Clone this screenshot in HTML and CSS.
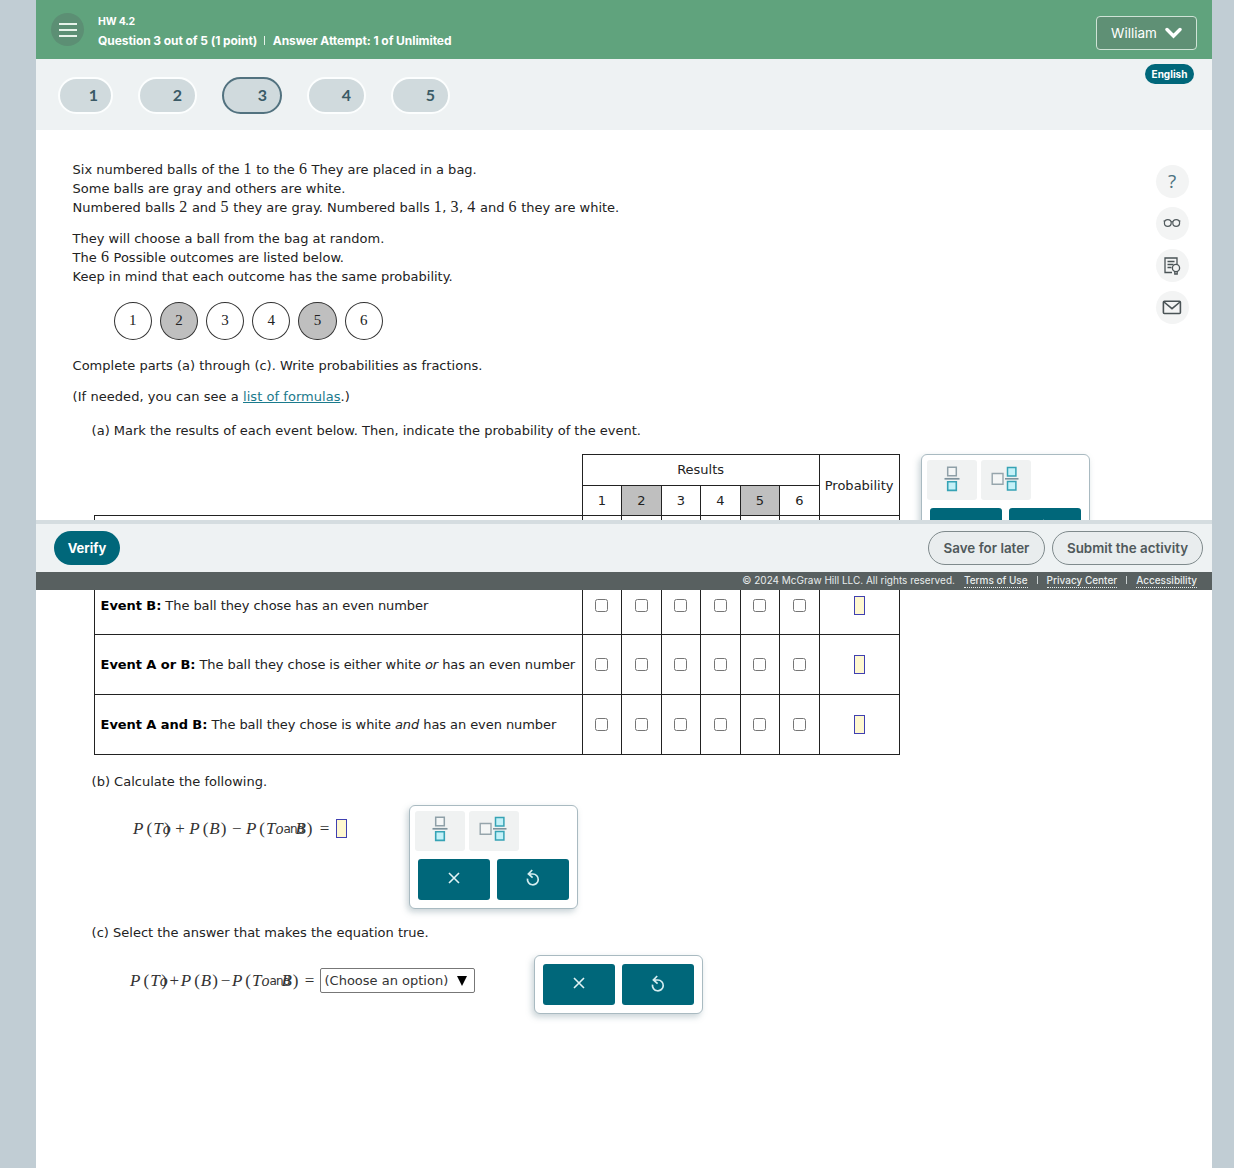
FILE: index.html
```html
<!DOCTYPE html>
<html lang="en">
<head>
  <meta charset="UTF-8" />
  <meta name="viewport" content="width=device-width" />
  <title>HW 4.2</title>
  <link rel="stylesheet" href="styles.css">
</head>

<body>
  <!-- shared icons -->
  <svg class="sprite" width="0" height="0">
    <symbol id="fraction" viewBox="0 0 16 26">
      <path d="M3.7 1.2h8.6v8.6H3.7z" fill="#f4f6f6" stroke="#8fa0a8" stroke-width="1.5" />
      <path d="M.5 12.8h15" stroke="#7d929c" stroke-width="1.7" />
      <path d="M3.7 15.8h8.6v8.6H3.7z" fill="#c3f1f8" stroke="#36a3b5" stroke-width="1.6" />
    </symbol>
    <symbol id="mixed" viewBox="0 0 28 26">
      <path d="M1.2 7.5h10.8v10.8H1.2z" fill="#f4f6f6" stroke="#96a5ac" stroke-width="1.4" />
      <path d="M14 12.8h13.5" stroke="#7d929c" stroke-width="1.6" />
      <path d="M16.5 1.5h8.4v8.4h-8.4zM16.5 15.5h8.4v8.4h-8.4z" fill="#c3f1f8" stroke="#36a3b5" stroke-width="1.5" />
    </symbol>
    <symbol id="cross" viewBox="0 0 12 12">
      <path d="M1 1l10 10M11 1L1 11" stroke="#e2f3f5" stroke-width="1.6" />
    </symbol>
    <symbol id="undo" viewBox="0 0 14 17">
      <path d="M1.5 9.6A5.4 5.4 0 1 0 6.9 5H3M6.2 1L2.4 5l4.2 3.6" fill="none" stroke="#d5edf0" stroke-width="1.7" />
    </symbol>
  </svg>

  <div class="page">
    <header class="header">
      <button class="menu" aria-label="Menu"><span></span><span></span><span></span></button>
      <div class="title">
        <div class="hw">HW 4.2</div>
        <div class="question">Question 3 out of 5 (1 point) <i></i> Answer Attempt: 1 of Unlimited</div>
      </div>
      <button class="user">William
        <svg width="17" height="12" viewBox="0 0 17 12"><path d="M2 2.5l6.5 6.5L15 2.5" fill="none" stroke="#fff" stroke-width="3.4" stroke-linecap="round" /></svg>
      </button>
    </header>

    <nav class="nav">
      <a class="pill first">1</a>
      <a class="pill">2</a>
      <a class="pill current">3</a>
      <a class="pill">4</a>
      <a class="pill">5</a>
      <span class="language">English</span>
    </nav>

    <main class="main">
      <div class="content">
        <p>Six numbered balls of the <b>1</b> to the <b>6</b> They are placed in a bag.<br>Some balls are gray and others are white.<br>Numbered balls <b>2</b> and <b>5</b> they are gray. Numbered balls <b>1</b>, <b>3</b>, <b>4</b> and <b>6</b> they are white.</p>
        <p>They will choose a ball from the bag at random.<br>The <b>6</b> Possible outcomes are listed below.<br>Keep in mind that each outcome has the same probability.</p>

        <div class="balls">
          <span class="ball">1</span>
          <span class="ball gray">2</span>
          <span class="ball">3</span>
          <span class="ball">4</span>
          <span class="ball gray">5</span>
          <span class="ball">6</span>
        </div>

        <p>Complete parts (a) through (c). Write probabilities as fractions.</p>
        <p class="formulas">(If needed, you can see a <a href="#">list of formulas</a>.)</p>

        <div class="part">
          <p class="label">(a) Mark the results of each event below. Then, indicate the probability of the event.</p>
          <div class="row">
            <table class="events">
              <colgroup>
                <col class="c-event"><col class="c-num" span="6"><col class="c-prob">
              </colgroup>
              <thead>
                <tr>
                  <th rowspan="2" class="empty"></th>
                  <th colspan="6">Results</th>
                  <th rowspan="2">Probability</th>
                </tr>
                <tr>
                  <th>1</th><th class="gray">2</th><th>3</th><th>4</th><th class="gray">5</th><th>6</th>
                </tr>
              </thead>
              <tbody>
                <tr>
                  <td></td>
                  <td></td><td></td><td></td><td></td><td></td><td></td>
                  <td></td>
                </tr>
                <tr>
                  <td><strong>Event B:</strong> The ball they chose has an even number</td>
                  <td><input type="checkbox"></td><td><input type="checkbox"></td><td><input type="checkbox"></td><td><input type="checkbox"></td><td><input type="checkbox"></td><td><input type="checkbox"></td>
                  <td><span class="answer"></span></td>
                </tr>
                <tr>
                  <td><strong>Event A or B:</strong> The ball they chose is either white <em>or</em> has an even number</td>
                  <td><input type="checkbox"></td><td><input type="checkbox"></td><td><input type="checkbox"></td><td><input type="checkbox"></td><td><input type="checkbox"></td><td><input type="checkbox"></td>
                  <td><span class="answer"></span></td>
                </tr>
                <tr>
                  <td><strong>Event A and B:</strong> The ball they chose is white <em>and</em> has an even number</td>
                  <td><input type="checkbox"></td><td><input type="checkbox"></td><td><input type="checkbox"></td><td><input type="checkbox"></td><td><input type="checkbox"></td><td><input type="checkbox"></td>
                  <td><span class="answer"></span></td>
                </tr>
              </tbody>
            </table>
            <div class="keypad">
              <div class="tools">
                <button><svg width="16" height="26"><use href="#fraction" /></svg></button>
                <button><svg width="28" height="26"><use href="#mixed" /></svg></button>
              </div>
              <div class="actions">
                <button><svg width="12" height="12"><use href="#cross" /></svg></button>
                <button><svg width="14" height="17"><use href="#undo" /></svg></button>
              </div>
            </div>
          </div>
        </div>

        <div class="part part-b">
          <p class="label">(b) Calculate the following.</p>
          <div class="row">
            <div class="math">
              <i class="p">P</i><s>(</s><i>T</i><i class="small">o</i><s class="over">)</s><u>+</u><i class="p">P</i><s>(</s><i>B</i><s>)</s><u>−</u><i class="p">P</i><s>(</s><i>T</i><i class="small">o</i><span class="and">and</span><i class="over-b">B</i><s>)</s><u class="eq">=</u><span class="answer"></span>
            </div>
            <div class="keypad">
              <div class="tools">
                <button><svg width="16" height="26"><use href="#fraction" /></svg></button>
                <button><svg width="28" height="26"><use href="#mixed" /></svg></button>
              </div>
              <div class="actions">
                <button><svg width="12" height="12"><use href="#cross" /></svg></button>
                <button><svg width="14" height="17"><use href="#undo" /></svg></button>
              </div>
            </div>
          </div>
        </div>

        <div class="part part-c">
          <p class="label">(c) Select the answer that makes the equation true.</p>
          <div class="row">
            <div class="math tight">
              <i class="p">P</i><s>(</s><i>T</i><i class="small">o</i><s class="over">)</s><u>+</u><i class="p">P</i><s>(</s><i>B</i><s>)</s><u>−</u><i class="p">P</i><s>(</s><i>T</i><i class="small">o</i><span class="and">and</span><i class="over-b">B</i><s>)</s><u class="eq">=</u><span class="choose">(Choose an option) <svg width="10" height="10" viewBox="0 0 10 10"><path d="M0 0h10L5 10z" /></svg></span>
            </div>
            <div class="keypad">
              <div class="actions">
                <button><svg width="12" height="12"><use href="#cross" /></svg></button>
                <button><svg width="14" height="17"><use href="#undo" /></svg></button>
              </div>
            </div>
          </div>
        </div>
      </div>

      <aside class="side">
        <a class="help">?</a>
        <a><svg width="18" height="10" viewBox="0 0 18 10" fill="none" stroke="#525b5e" stroke-width="1.2"><circle cx="4.8" cy="5" r="3.4" /><circle cx="13.2" cy="5" r="3.4" /><path d="M8 4q1-.8 2 0M1.8 3.4L.6 2.8M16.2 3.4l1.2-.6" /></svg></a>
        <a><svg width="18" height="20" viewBox="0 0 18 20" fill="none" stroke="#4a5356" stroke-width="1.3"><path d="M9 16.5H2V2h12v6M4.5 5.5h7M4.5 8.5h6M4.5 11.5h4" /><circle cx="13" cy="12" r="3.6" /><path d="M11.8 15.2v2.8h2.4v-2.8" /></svg></a>
        <a><svg width="20" height="15" viewBox="0 0 20 15" fill="none" stroke="#4a5356" stroke-width="1.6"><rect x="1.4" y="1.3" width="17" height="12.2" rx="1" /><path d="M2 2l8 6.6L18 2" /></svg></a>
      </aside>
    </main>

    <footer class="footer">
      <div class="buttons">
        <button class="verify">Verify</button>
        <button class="save">Save for later</button>
        <button class="submit">Submit the activity</button>
      </div>
      <div class="legal">
        <span class="copy">© 2024 McGraw Hill LLC. All rights reserved.</span>
        <a>Terms of Use</a><i></i><a>Privacy Center</a><i></i><a>Accessibility</a>
      </div>
    </footer>
  </div>
</body>
</html>
```
FILE: styles.css
```css
* {
  box-sizing: border-box;
}

body {
  margin: 0;
  background: #c1cdd4;
  font-family: "DejaVu Sans", Verdana, sans-serif;
  font-size: 13px;
  color: #222;
}

button {
  padding: 0;
  border: 0;
  font-family: inherit;
}

.sprite {
  position: absolute;
}

.page {
  position: relative;
  width: 1176px;
  height: 1168px;
  margin-left: 36px;
  background: #fff;
  overflow: hidden;
}

/* Header */
.header {
  display: flex;
  align-items: flex-start;
  height: 59px;
  padding: 13px 15px 0;
  background: #60a37d;
  font-family: Inter, sans-serif;
  color: #fff;
}

.menu {
  display: flex;
  flex-direction: column;
  align-items: center;
  justify-content: center;
  gap: 4px;
  width: 33px;
  height: 33px;
  border-radius: 50%;
  background: #5c8f74;
}

.menu span {
  width: 18px;
  height: 2px;
  background: #e7f3ea;
}

.title {
  flex: 1;
  margin-left: 14px;
  font-weight: 700;
}

.hw {
  font-size: 10.5px;
  line-height: 17px;
  letter-spacing: -0.2px;
}

.question {
  margin-top: 2px;
  font-size: 12px;
  line-height: 18px;
  letter-spacing: -0.07px;
}

.question i {
  display: inline-block;
  width: 1px;
  height: 9px;
  margin: 0 5px 0 4px;
  background: #e7f3ea;
}

.user {
  display: flex;
  align-items: center;
  justify-content: center;
  gap: 8px;
  width: 101px;
  height: 34px;
  margin-top: 3px;
  padding-bottom: 1px;
  border: 1px solid #cfe3d6;
  border-radius: 4px;
  background: #5f9075;
  font-size: 13.5px;
  color: #fff;
}

/* Question numbers */
.nav {
  display: flex;
  align-items: flex-start;
  height: 71px;
  padding: 18px 19px 0 22px;
  background: #eef2f3;
  font-family: Lato, sans-serif;
}

.pill {
  width: 59px;
  height: 37px;
  margin-right: 25px;
  padding-right: 13px;
  border: 2px solid #fcfefe;
  border-radius: 19px;
  background: #d0dadd;
  font-size: 16px;
  font-weight: 700;
  line-height: 32px;
  text-align: right;
  color: #3b5a66;
}

.pill.first {
  width: 55px;
}

.pill.current {
  width: 60px;
  border-color: #52727f;
}

.language {
  width: 49px;
  height: 20px;
  margin: -13px -1px 0 auto;
  border-radius: 10px;
  background: #00677a;
  font-family: Inter, sans-serif;
  font-size: 10px;
  font-weight: 700;
  line-height: 20px;
  text-align: center;
  color: #fff;
}

/* Question text */
.main {
  display: flex;
  padding: 30px 23.5px 0 36.6px;
}

.content {
  flex: 1;
}

p {
  margin: 0 0 12px;
  line-height: 19px;
}

p b {
  margin-right: 0.5px;
  font-family: "Liberation Serif", serif;
  font-size: 16px;
  font-weight: 400;
  line-height: 1;
}

p a {
  color: #1a7a8c;
}

.formulas {
  letter-spacing: 0.05px;
}

.balls {
  display: flex;
  gap: 8px;
  margin: 16px 0 16px 41px;
}

.ball {
  width: 38.2px;
  height: 38px;
  border: 1px solid #333;
  border-radius: 50%;
  font-family: "Liberation Serif", serif;
  font-size: 15px;
  line-height: 35px;
  text-align: center;
}

.gray {
  background: #bfbfbf;
}

.part {
  padding-left: 19px;
}

.part .label {
  margin: 15px 0 14px;
}

.part-b .label {
  margin-top: 17px;
}

.row {
  display: flex;
  align-items: flex-start;
}

/* Table of events */
.events {
  width: 806px;
  margin-left: 2px;
  border-collapse: collapse;
  table-layout: fixed;
}

.c-event {
  width: 488px;
}

.c-num {
  width: 39.5px;
}

.events th,
.events td {
  height: 59.7px;
  padding: 0;
  border: 1px solid #222;
  font-weight: 400;
  text-align: center;
}

.events th {
  height: 30.5px;
}

.events .empty {
  border-top: 0;
  border-left: 0;
}

.events td:first-child {
  padding-left: 6px;
  letter-spacing: -0.07px;
  text-align: left;
  white-space: nowrap;
}

.events strong {
  color: #000;
}

.events input {
  display: block;
  width: 13px;
  height: 13px;
  margin: 0 auto;
}

.answer {
  display: inline-block;
  width: 11px;
  height: 19px;
  border: 1px solid #4040b0;
  background: #fff8d0;
  vertical-align: middle;
}

/* Fraction keypad */
.keypad {
  flex: none;
  width: 169px;
  margin-left: 21.5px;
  padding: 5px;
  border: 1px solid #a9bac1;
  border-radius: 6px;
  background: #fff;
  box-shadow: -2px 3px 6px rgba(100, 130, 140, 0.35);
}

.keypad button {
  display: flex;
  align-items: center;
  justify-content: center;
}

.tools {
  display: flex;
  gap: 4px;
  margin-bottom: 8px;
}

.tools button {
  width: 50px;
  height: 40px;
  padding: 0 0 3px;
  border-radius: 3px;
  background: #f0f2f2;
}

.tools button + button {
  padding-right: 2px;
}

.actions {
  display: flex;
  gap: 7px;
  padding: 0 3px 3px;
}

.actions button {
  width: 72px;
  height: 41px;
  padding-bottom: 3px;
  border-radius: 3px;
  background: #00677a;
}

/* Formulas */
.math {
  display: flex;
  flex: none;
  align-items: center;
  width: 276px;
  height: 48px;
  padding-left: 41.5px;
  font-family: "Liberation Serif", serif;
  font-size: 17px;
  color: #333;
}

.math > * {
  flex: none;
}

.math s,
.math u {
  text-decoration: none;
}

.math s {
  margin: 0 1px;
}

.math .p {
  margin-right: 2px;
}

.math u {
  width: 18.5px;
  text-align: center;
}

.math .over {
  margin-left: -6.5px;
}

.math .small {
  font-size: 16px;
}

.math .and {
  font-family: "DejaVu Sans", sans-serif;
  font-size: 12px;
  letter-spacing: -0.7px;
}

.math .over-b {
  margin-left: -8.5px;
}

.math .eq {
  width: 22px;
}

.choose {
  display: flex;
  align-items: center;
  justify-content: space-between;
  width: 155px;
  height: 25px;
  padding: 0 7px 0 4px;
  border: 1px solid #777;
  border-radius: 2px;
  font-family: "DejaVu Sans", Verdana, sans-serif;
  font-size: 13px;
  white-space: nowrap;
}

.part-b .keypad {
  margin-left: 41.5px;
}

.part-c .label {
  margin-top: 14px;
}

.math.tight {
  width: 384px;
  height: 50px;
  padding-left: 38.5px;
}

.math.tight u {
  width: 13px;
}

.math.tight .eq {
  width: 20px;
}

.part-c .keypad {
  margin-top: -0.5px;
  margin-left: 58.5px;
  padding-top: 8px;
}

/* Side icons */
.side {
  display: flex;
  flex-direction: column;
  gap: 9.2px;
  margin-top: 4.7px;
}

.side a {
  display: flex;
  align-items: center;
  justify-content: center;
  width: 33px;
  height: 33px;
  border-radius: 50%;
  background: #f3f4f4;
}

.side .help {
  font-family: "Open Sans", sans-serif;
  font-size: 19px;
  color: #4b7180;
}

/* Footer bar sits over the question */
.footer {
  position: absolute;
  top: 520px;
  left: 0;
  width: 100%;
}

.buttons {
  display: flex;
  height: 52px;
  padding: 7px 9px 0 18px;
  border-top: 4px solid #d5dde0;
  background: #eef2f3;
}

.buttons button {
  height: 34px;
  border-radius: 17px;
  font-family: Inter, sans-serif;
  font-size: 13.4px;
  font-weight: 600;
}

.buttons .verify {
  width: 66px;
  margin-right: auto;
  background: #00677a;
  font-size: 13px;
  font-weight: 700;
  color: #fff;
}

.buttons .save,
.buttons .submit {
  border: 1px solid #7f8a8c;
  background: #e9edee;
  color: #50595b;
}

.save {
  width: 117px;
}

.submit {
  width: 151px;
  margin-left: 7px;
}

.legal {
  display: flex;
  align-items: flex-start;
  justify-content: flex-end;
  height: 18px;
  padding: 1px 15px 0 0;
  background: #586060;
  font-family: Inter, sans-serif;
  font-size: 10px;
  line-height: 14px;
  color: #e8eded;
}

.legal a {
  font-weight: 500;
  border-bottom: 1px dotted #e8eded;
}

.legal .copy {
  margin-right: 9px;
}

.legal i {
  width: 1px;
  height: 8px;
  margin: 3px 9px 0;
  background: #c9d0d0;
}
```
